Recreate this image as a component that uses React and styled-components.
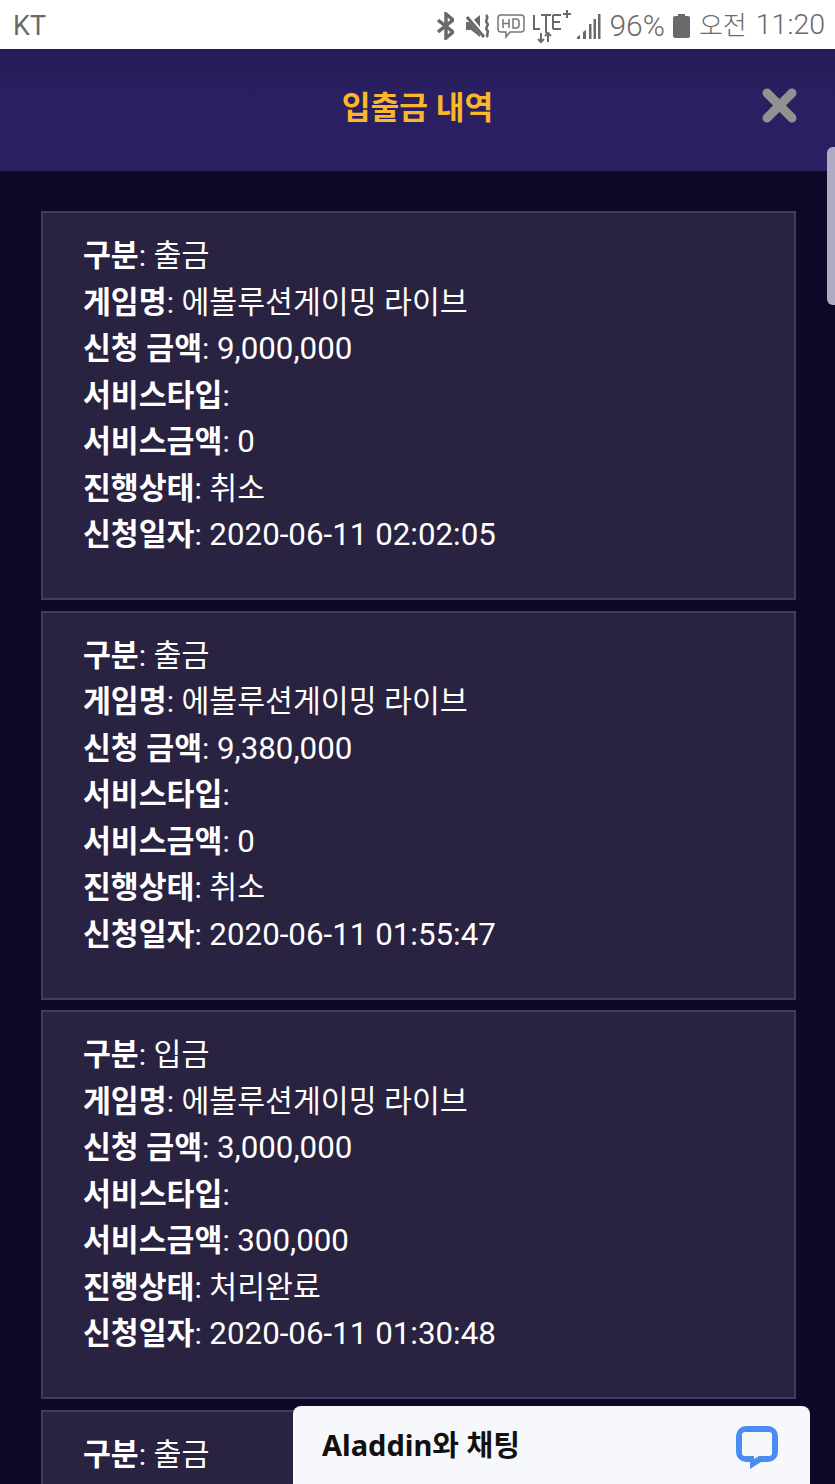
import React from 'react';
import styled, { createGlobalStyle } from 'styled-components';

const GlobalStyle = createGlobalStyle`
	html, body {
		margin: 0;
		padding: 0;
		background: #0f0829;
	}
	body {
		font-family: Roboto, "Noto Sans CJK KR", sans-serif;
	}
`;

const Screen = styled.div`
	position: relative;
	width: 835px;
	height: 1484px;
	overflow: hidden;
	background: #0f0829;
`;

const StatusBar = styled.div`
	display: flex;
	align-items: center;
	justify-content: space-between;
	box-sizing: border-box;
	height: 49px;
	padding: 2px 10px 0 13px;
	background: #fff;
	color: #6a6a6a;
	font-weight: 300;
`;

const Carrier = styled.span`
	font-size: 27px;
	font-weight: 400;
`;

const StatusIcons = styled.div`
	display: flex;
	align-items: center;
`;

const Glyph = styled.svg`
	flex: none;
	margin-right: ${(props) => props.$gap}px;
`;

const Percent = styled.span`
	margin-right: 8px;
	font-size: 30px;
	line-height: 1;
`;

const Clock = styled.span`
	display: flex;
	align-items: center;
	gap: 9px;
	line-height: 1;
	white-space: nowrap;
`;

const Meridiem = styled.span`
	font-size: 26px;
`;

const Time = styled.span`
	font-size: 28.500px;
`;

const Header = styled.header`
	position: relative;
	display: flex;
	align-items: center;
	justify-content: center;
	height: 122px;
	background: linear-gradient(#261c58, #2a1f60 40%);
`;

const Title = styled.h1`
	margin: 0 0 3px;
	color: #fbb62b;
	font-size: 31.300px;
	font-weight: 700;
	line-height: 1;
`;

const CloseIcon = styled.svg`
	position: absolute;
	top: 38px;
	right: 37px;
	width: 37px;
	height: 37px;
`;

const List = styled.main`
	display: flex;
	flex-direction: column;
	gap: 10.5px;
	padding: 40px 39px 0 41px;
`;

const Card = styled.section`
	box-sizing: border-box;
	flex: none;
	height: 389px;
	padding: 20px 40px;
	background: #292240;
	border: 2px solid #423b60;
	color: #fff;
	font-size: 30.300px;
	line-height: 46.5px;
`;

const Row = styled.div`
	white-space: nowrap;
`;

const Label = styled.strong`
	font-weight: 700;
`;

const Digits = styled.span`
	font-size: 31.300px;
`;

const ScrollThumb = styled.div`
	position: absolute;
	top: 147px;
	right: 0;
	width: 8px;
	height: 158px;
	background: #b0abc2;
	border-radius: 6px 0 0 6px;
`;

const ChatBar = styled.div`
	position: absolute;
	left: 293px;
	top: 1406px;
	display: flex;
	align-items: flex-start;
	justify-content: space-between;
	box-sizing: border-box;
	width: 517px;
	height: 78px;
	padding: 20px 32px 0 29px;
	background: #f7f8fb;
	border-radius: 8px 8px 0 0;
`;

const ChatTitle = styled.span`
	color: #111;
	font-family: "Noto Sans", "Noto Sans CJK KR", sans-serif;
	font-size: 29px;
	font-weight: 700;
	line-height: 38px;
`;

const ChatIcon = styled.svg`
	width: 42px;
	height: 43px;
`;

const records = [
	{ type: '출금', amount: '9,000,000', bonus: '0', state: '취소', date: '2020-06-11 02:02:05' },
	{ type: '출금', amount: '9,380,000', bonus: '0', state: '취소', date: '2020-06-11 01:55:47' },
	{ type: '입금', amount: '3,000,000', bonus: '300,000', state: '처리완료', date: '2020-06-11 01:30:48' },
	{ type: '출금' },
];

const StatusGlyphs = () => (
	<>
		<Glyph $gap={12} width="17" height="28" viewBox="0 0 17 28" fill="none" stroke="#6a6a6a" strokeWidth="3.500">
			<path d="M1 8l15 12-7 6V2l7 6L1 20" />
		</Glyph>
		<Glyph $gap={5} width="26" height="26" viewBox="0 0 26 26">
			<path d="M0 9h5l9-7v22l-9-7H0z" fill="#6a6a6a" />
			<path d="M1 2l18 22" stroke="#fff" strokeWidth="5" />
			<path d="M1 4l17 20" stroke="#6a6a6a" strokeWidth="3" />
			<path d="M20 2c4 3-2 5 1 8s-3 4 0 7-2 4 1 7" fill="none" stroke="#6a6a6a" strokeWidth="2.500" />
		</Glyph>
		<Glyph $gap={8} width="28" height="27" viewBox="0 0 28 27" fill="none" stroke="#777" strokeWidth="1.500">
			<path d="M4 3h20a3 3 0 0 1 3 3v11a3 3 0 0 1-3 3H13l-4 5v-5H4a3 3 0 0 1-3-3V6a3 3 0 0 1 3-3z" />
			<path d="M6 7v9M12 7v9M6 11.500h6M16 7v9h3a3 3 0 0 0 3-3v-3a3 3 0 0 0-3-3z" />
		</Glyph>
		<Glyph $gap={6} width="38" height="36" viewBox="0 0 38 36" fill="none" stroke="#6a6a6a" strokeWidth="2">
			<path d="M1 7v14h6M8 7h10M13 7v18M20 7v14M20 7h8M20 14h7M20 21h8M30 6h8M34 2v8" />
			<path d="M8 25v9M5 31l3 3 3-3M15 34v-9M12 28l3-3 3 3" />
		</Glyph>
		<Glyph $gap={8} width="24" height="28" viewBox="0 0 24 28" fill="#6a6a6a">
			<path d="M0 27v-2l3-2v4zM6 27v-7l3-2v9z" />
			<rect x="12" y="12" width="2.500" height="15" />
			<rect x="21" y="2" width="2.500" height="25" />
			<rect x="16.500" y="7" width="2.500" height="20" />
		</Glyph>
	</>
);

const App = () => {
	return (
		<Screen>
			<GlobalStyle />
			<StatusBar>
				<Carrier>KT</Carrier>
				<StatusIcons>
					<StatusGlyphs />
					<Percent>96%</Percent>
					<Glyph $gap={9} width="17" height="24" viewBox="0 0 17 24" fill="#6a6a6a">
						<path d="M5 0h7v2h3a2 2 0 0 1 2 2v18a2 2 0 0 1-2 2H2a2 2 0 0 1-2-2V4a2 2 0 0 1 2-2h3z" />
					</Glyph>
					<Clock>
						<Meridiem>오전</Meridiem>
						<Time>11:20</Time>
					</Clock>
				</StatusIcons>
			</StatusBar>
			<Header>
				<Title>입출금 내역</Title>
				<CloseIcon viewBox="0 0 37 37">
					<path d="M6 6l25 25M31 6L6 31" stroke="#929292" strokeWidth="9" strokeLinecap="round" />
				</CloseIcon>
			</Header>
			<List>
				{records.map((r, i) => (
					<Card key={i}>
						<Row><Label>구분</Label>: {r.type}</Row>
						{r.date && (
							<>
								<Row><Label>게임명</Label>: 에볼루션게이밍 라이브</Row>
								<Row><Label>신청 금액</Label>: <Digits>{r.amount}</Digits></Row>
								<Row><Label>서비스타입</Label>:</Row>
								<Row><Label>서비스금액</Label>: <Digits>{r.bonus}</Digits></Row>
								<Row><Label>진행상태</Label>: {r.state}</Row>
								<Row><Label>신청일자</Label>: <Digits>{r.date}</Digits></Row>
							</>
						)}
					</Card>
				))}
			</List>
			<ScrollThumb />
			<ChatBar>
				<ChatTitle>Aladdin와 채팅</ChatTitle>
				<ChatIcon viewBox="0 0 42 43">
					<path
						fillRule="evenodd"
						fill="#4a8cf2"
						d="M10 0h22a10 10 0 0 1 10 10v16a10 10 0 0 1-10 10h-7l-11 7v-7h-4a10 10 0 0 1-10-10V10a10 10 0 0 1 10-10zm-1 6a3 3 0 0 0-3 3v18a3 3 0 0 0 3 3h9v3l5-3h10a3 3 0 0 0 3-3V9a3 3 0 0 0-3-3z"
					/>
				</ChatIcon>
			</ChatBar>
		</Screen>
	);
};

export default App;
